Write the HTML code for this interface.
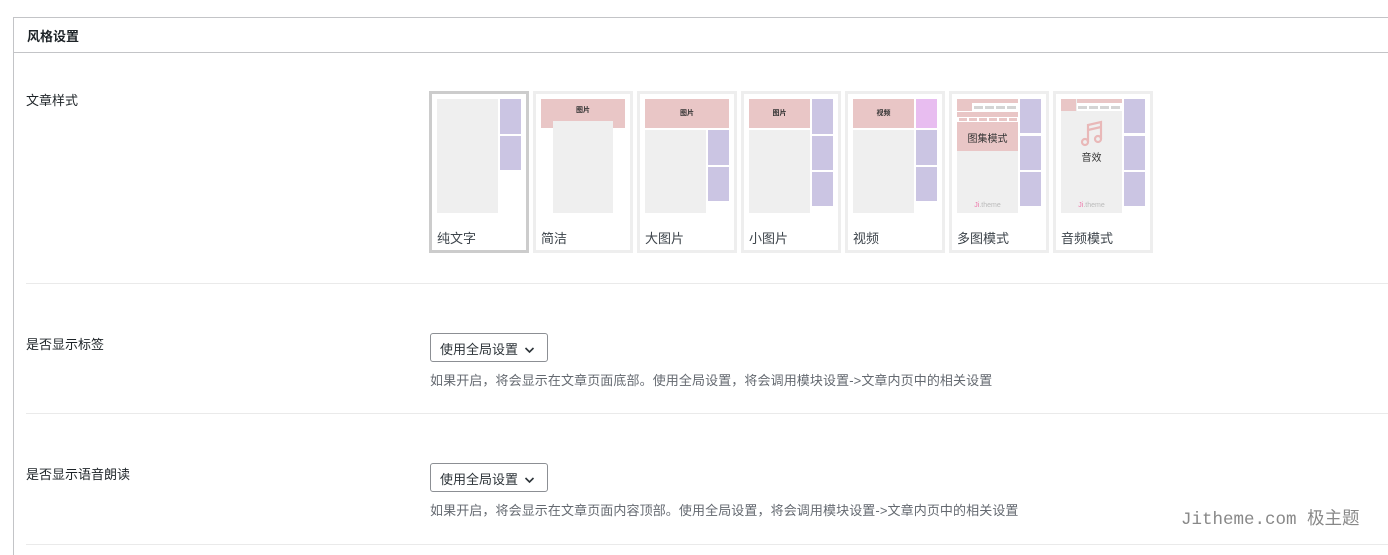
<!DOCTYPE html>
<html><head><meta charset="utf-8"><style>
*{margin:0;padding:0;box-sizing:border-box}
html,body{width:1388px;height:555px;overflow:hidden}
body{background:#fff;position:relative;font-family:"Liberation Sans","Noto Sans CJK SC",sans-serif;color:#3c434a;font-size:13px}
.a{position:absolute}
.box{left:13px;top:17px;width:1390px;height:560px;border:1px solid #c3c4c7}
.hd{left:14px;top:18px;width:1380px;height:35px;border-bottom:1px solid #c3c4c7}
.hd span{position:absolute;left:13px;top:8px;font-weight:bold;font-size:13px;color:#1d2327}
.hr{left:26px;width:1362px;height:1px;background:#eaeaea}
.card{top:91px;width:100px;height:162px;border:3px solid #eeeeee;background:#fff}
.g{background:#efefef}.p{background:#cbc5e3}.k{background:#e9c6c6}
.lbl{top:228px;font-size:13px;color:#3c434a}
.t{font-size:7px;font-weight:bold;color:#333;text-align:center;line-height:29px}
.sel{left:430px;width:118px;height:29px;border:1px solid #8c8f94;border-radius:3px;font-size:13px;color:#2c3338;padding:5px 0 0 9px}
.help{left:430px;font-size:13px;color:#646970;letter-spacing:0.1px}
.lt{left:26px;font-size:13px;color:#1d2327}
</style></head><body>
<div class="a box"></div>
<div class="a hd"><span>风格设置</span></div>
<div class="a lt" style="top:90px">文章样式</div>

<div class="a card" style="left:429px;border-color:#cccccc"></div>
<div class="a g" style="left:437px;top:99px;width:61px;height:114px"></div>
<div class="a p" style="left:500px;top:99px;width:21px;height:35px"></div>
<div class="a p" style="left:500px;top:136px;width:21px;height:34px"></div>
<div class="a lbl" style="left:437px">纯文字</div>

<div class="a card" style="left:533px"></div>
<div class="a k t" style="left:541px;top:99px;width:84px;height:29px;line-height:24px">图片</div>
<div class="a g" style="left:553px;top:121px;width:60px;height:92px"></div>
<div class="a lbl" style="left:541px">简洁</div>

<div class="a card" style="left:637px"></div>
<div class="a k t" style="left:645px;top:99px;width:84px;height:29px">图片</div>
<div class="a g" style="left:645px;top:130px;width:61px;height:83px"></div>
<div class="a p" style="left:708px;top:130px;width:21px;height:35px"></div>
<div class="a p" style="left:708px;top:167px;width:21px;height:34px"></div>
<div class="a lbl" style="left:645px">大图片</div>

<div class="a card" style="left:741px"></div>
<div class="a k t" style="left:749px;top:99px;width:61px;height:29px">图片</div>
<div class="a g" style="left:749px;top:130px;width:61px;height:83px"></div>
<div class="a p" style="left:812px;top:99px;width:21px;height:35px"></div>
<div class="a p" style="left:812px;top:136px;width:21px;height:34px"></div>
<div class="a p" style="left:812px;top:172px;width:21px;height:34px"></div>
<div class="a lbl" style="left:749px">小图片</div>

<div class="a card" style="left:845px"></div>
<div class="a k t" style="left:853px;top:99px;width:61px;height:29px">视频</div>
<div class="a" style="left:916px;top:99px;width:21px;height:29px;background:#e8bdf0"></div>
<div class="a g" style="left:853px;top:130px;width:61px;height:83px"></div>
<div class="a p" style="left:916px;top:130px;width:21px;height:35px"></div>
<div class="a p" style="left:916px;top:167px;width:21px;height:34px"></div>
<div class="a lbl" style="left:853px">视频</div>

<div class="a card" style="left:949px"></div>
<div class="a g" style="left:957px;top:99px;width:61px;height:114px"></div>
<div class="a k" style="left:957px;top:99px;width:61px;height:52px"></div>
<div class="a" style="left:972px;top:103px;width:46px;height:8px;background:#fff"></div>
<div class="a" style="left:974px;top:106px;width:42px;height:3px;background:repeating-linear-gradient(90deg,#d4d4d4 0 9px,#fff 9px 11px)"></div>
<div class="a" style="left:957px;top:111px;width:61px;height:1px;background:#fff"></div>
<div class="a" style="left:957px;top:117px;width:61px;height:5px;background:repeating-linear-gradient(90deg,#fff 0 2px,#e9c6c6 2px 10px)"></div>
<div class="a" style="left:957px;top:117px;width:61px;height:1px;background:#fff"></div>
<div class="a" style="left:957px;top:121px;width:61px;height:1px;background:#fff"></div>
<div class="a" style="left:957px;top:130px;width:61px;text-align:center;font-size:10px;color:#333">图集模式</div>
<div class="a" style="left:957px;top:202px;width:61px;text-align:center;font-size:7px;color:#bbb"><span style="color:#e7a">Ji</span>.theme</div>
<div class="a p" style="left:1020px;top:99px;width:21px;height:34px"></div>
<div class="a p" style="left:1020px;top:136px;width:21px;height:34px"></div>
<div class="a p" style="left:1020px;top:172px;width:21px;height:34px"></div>
<div class="a lbl" style="left:957px">多图模式</div>

<div class="a card" style="left:1053px"></div>
<div class="a g" style="left:1061px;top:99px;width:61px;height:114px"></div>
<div class="a k" style="left:1061px;top:99px;width:15px;height:12px"></div>
<div class="a k" style="left:1077px;top:99px;width:45px;height:4px"></div>
<div class="a" style="left:1077px;top:103px;width:45px;height:8px;background:#fff"></div>
<div class="a" style="left:1078px;top:106px;width:42px;height:3px;background:repeating-linear-gradient(90deg,#d4d4d4 0 9px,#fff 9px 11px)"></div>
<svg class="a" style="left:1080px;top:120px" width="26" height="28" viewBox="0 0 26 28"><g fill="none" stroke="#e9b8b8" stroke-width="2.2"><path d="M8 22V5l13-3v17"/><path d="M8 10l13-3"/><circle cx="5" cy="22" r="3"/><circle cx="18" cy="19" r="3"/></g></svg>
<div class="a" style="left:1061px;top:149px;width:61px;text-align:center;font-size:10px;color:#333">音效</div>
<div class="a" style="left:1061px;top:202px;width:61px;text-align:center;font-size:7px;color:#bbb"><span style="color:#e7a">Ji</span>.theme</div>
<div class="a p" style="left:1124px;top:99px;width:21px;height:34px"></div>
<div class="a p" style="left:1124px;top:136px;width:21px;height:34px"></div>
<div class="a p" style="left:1124px;top:172px;width:21px;height:34px"></div>
<div class="a lbl" style="left:1061px">音频模式</div>

<div class="a hr" style="top:283px"></div>
<div class="a lt" style="top:334px">是否显示标签</div>
<div class="a sel" style="top:333px">使用全局设置 <svg width="11" height="8" viewBox="0 0 11 8" style="margin-left:2px"><path d="M1.5 2l4 4 4-4" fill="none" stroke="#2c3338" stroke-width="1.6"/></svg></div>
<div class="a help" style="top:370px">如果开启，将会显示在文章页面底部。使用全局设置，将会调用模块设置-&gt;文章内页中的相关设置</div>
<div class="a hr" style="top:413px"></div>
<div class="a lt" style="top:464px">是否显示语音朗读</div>
<div class="a sel" style="top:463px">使用全局设置 <svg width="11" height="8" viewBox="0 0 11 8" style="margin-left:2px"><path d="M1.5 2l4 4 4-4" fill="none" stroke="#2c3338" stroke-width="1.6"/></svg></div>
<div class="a help" style="top:500px">如果开启，将会显示在文章页面内容顶部。使用全局设置，将会调用模块设置-&gt;文章内页中的相关设置</div>
<div class="a" style="left:1181px;top:505px;font-family:'Liberation Mono','Noto Sans CJK SC',monospace;font-size:17.5px;color:#888">Jitheme.com 极主题</div>
<div class="a hr" style="top:544px"></div>
</body></html>
